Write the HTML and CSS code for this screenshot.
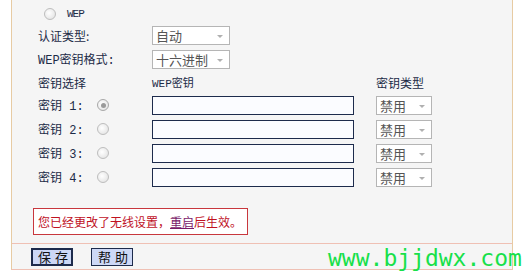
FILE: index.html
```html
<!DOCTYPE html>
<html lang="zh-CN">
<head>
    <meta charset="UTF-8">
    <title>无线安全设置</title>
    <link rel="stylesheet" href="styles.css">
</head>
<body>
    <div class="panel">
        <div class="content">
            <div class="row r-wep">
                <span class="radio"></span>
                <span class="wep">WEP</span>
            </div>
            <div class="row r-auth">
                <span class="label">认证类型:</span>
                <span class="select wide">自动<i class="arrow"></i></span>
            </div>
            <div class="row r-fmt">
                <span class="label">WEP密钥格式:</span>
                <span class="select wide">十六进制<i class="arrow"></i></span>
            </div>
            <div class="row r-head">
                <span class="label">密钥选择</span>
                <span class="col-key">WEP密钥</span>
                <span class="col-type">密钥类型</span>
            </div>

            <div class="row key">
                <span class="label short">密钥 1:</span>
                <span class="radio on"></span>
                <span class="input"></span>
                <span class="select narrow">禁用<i class="arrow"></i></span>
            </div>
            <div class="row key">
                <span class="label short">密钥 2:</span>
                <span class="radio"></span>
                <span class="input"></span>
                <span class="select narrow">禁用<i class="arrow"></i></span>
            </div>
            <div class="row key">
                <span class="label short">密钥 3:</span>
                <span class="radio"></span>
                <span class="input"></span>
                <span class="select narrow">禁用<i class="arrow"></i></span>
            </div>
            <div class="row key">
                <span class="label short">密钥 4:</span>
                <span class="radio"></span>
                <span class="input"></span>
                <span class="select narrow">禁用<i class="arrow"></i></span>
            </div>

            <div class="notice">
                您已经更改了无线设置，<a href="#">重启</a>后生效。
            </div>
        </div>

        <div class="buttons">
            <span class="btn primary">保存</span>
            <span class="btn">帮助</span>
        </div>
    </div>

    <div class="watermark">www.bjjdwx.com</div>
</body>
</html>
```

FILE: styles.css
```css
* {
    margin: 0;
    padding: 0;
    box-sizing: border-box;
}

body {
    background: #fff;
    font-family: "Liberation Mono", "Noto Sans CJK SC", monospace;
    font-size: 12px;
    color: #1c2b47;
    position: relative;
    width: 530px;
    height: 276px;
    overflow: hidden;
}

.panel {
    margin-left: 11px;
    width: 502px;
    background: #f5f5f5;
    border-left: 1px solid #e7cba3;
    border-right: 1px solid #e7cba3;
    border-bottom: 1px solid #efc0b4;
}

.content {
    padding: 3px 0 0 26px;
    height: 243px;
}

.row {
    display: flex;
    align-items: center;
}

.r-wep { height: 22px; }
.r-auth { height: 21px; }
.r-fmt { height: 26px; }
.r-head { height: 20px; margin-bottom: 1px; }
.key { height: 24px; }

.r-wep .radio {
    margin-left: 6px;
}

.wep {
    margin-left: 11px;
    font-size: 11px;
    letter-spacing: -1px;
}

.label {
    width: 114px;
    font-family: "Noto Sans CJK SC", "Liberation Mono", sans-serif;
}

.r-fmt .label {
    font-family: "Liberation Mono", "Noto Sans CJK SC", monospace;
}

.label.short {
    width: 59px;
    font-family: "Liberation Mono", "Noto Sans CJK SC", monospace;
}

.col-key {
    width: 224px;
    font-size: 11px;
}

.col-type {
    font-family: "Noto Sans CJK SC", sans-serif;
}

.radio {
    width: 12px;
    height: 12px;
    border-radius: 50%;
    border: 1px solid #bdbdbd;
    background: radial-gradient(circle at 40% 40%, #ffffff, #dedede);
    display: flex;
    align-items: center;
    justify-content: center;
}

.key .radio {
    margin-right: 43px;
}

.radio.on {
    border-color: #a8a8a8;
}

.radio.on::after {
    content: "";
    width: 5px;
    height: 5px;
    border-radius: 50%;
    background: #9a9a9a;
}

.select {
    position: relative;
    height: 19px;
    border: 1px solid #b5b5b5;
    background: #fff;
    color: #555;
    font-family: "Noto Sans CJK SC", sans-serif;
    font-size: 13px;
    line-height: 17px;
    padding-left: 3px;
}

.select.wide {
    width: 78px;
}

.select.narrow {
    width: 56px;
}

.arrow {
    position: absolute;
    right: 6px;
    top: 8px;
    width: 0;
    height: 0;
    border-left: 3px solid transparent;
    border-right: 3px solid transparent;
    border-top: 3px solid #b0b0b0;
}

.input {
    width: 202px;
    height: 19px;
    border: 1px solid #1d2b4c;
    background: #fbfcff;
    margin-right: 22px;
}

.notice {
    margin: 19px 0 0 -5px;
    width: 215px;
    height: 27px;
    border: 1px solid #c8373d;
    background: #fff;
    color: #c0111f;
    font-family: "Noto Sans CJK SC", sans-serif;
    font-size: 12px;
    line-height: 25px;
    padding-left: 4px;
}

.notice a {
    color: #7a1a6a;
}

.buttons {
    border-top: 1px solid #efc0b4;
    height: 26px;
    display: flex;
    align-items: center;
    gap: 18px;
    padding-left: 19px;
}

.btn {
    height: 18px;
    width: 42px;
    border: 1px solid #1d2b4c;
    background: #cdd8f6;
    color: #111;
    font-family: "Noto Sans CJK SC", sans-serif;
    font-size: 13px;
    line-height: 16px;
    letter-spacing: 4px;
    padding-left: 6px;
    white-space: nowrap;
    overflow: hidden;
}

.btn.primary {
    border-width: 2px;
    line-height: 14px;
    padding-left: 5px;
}

.watermark {
    position: absolute;
    left: 328px;
    top: 244px;
    font-family: "DejaVu Sans Mono", monospace;
    font-size: 23px;
    color: #18e04a;
    line-height: 28px;
}
```
